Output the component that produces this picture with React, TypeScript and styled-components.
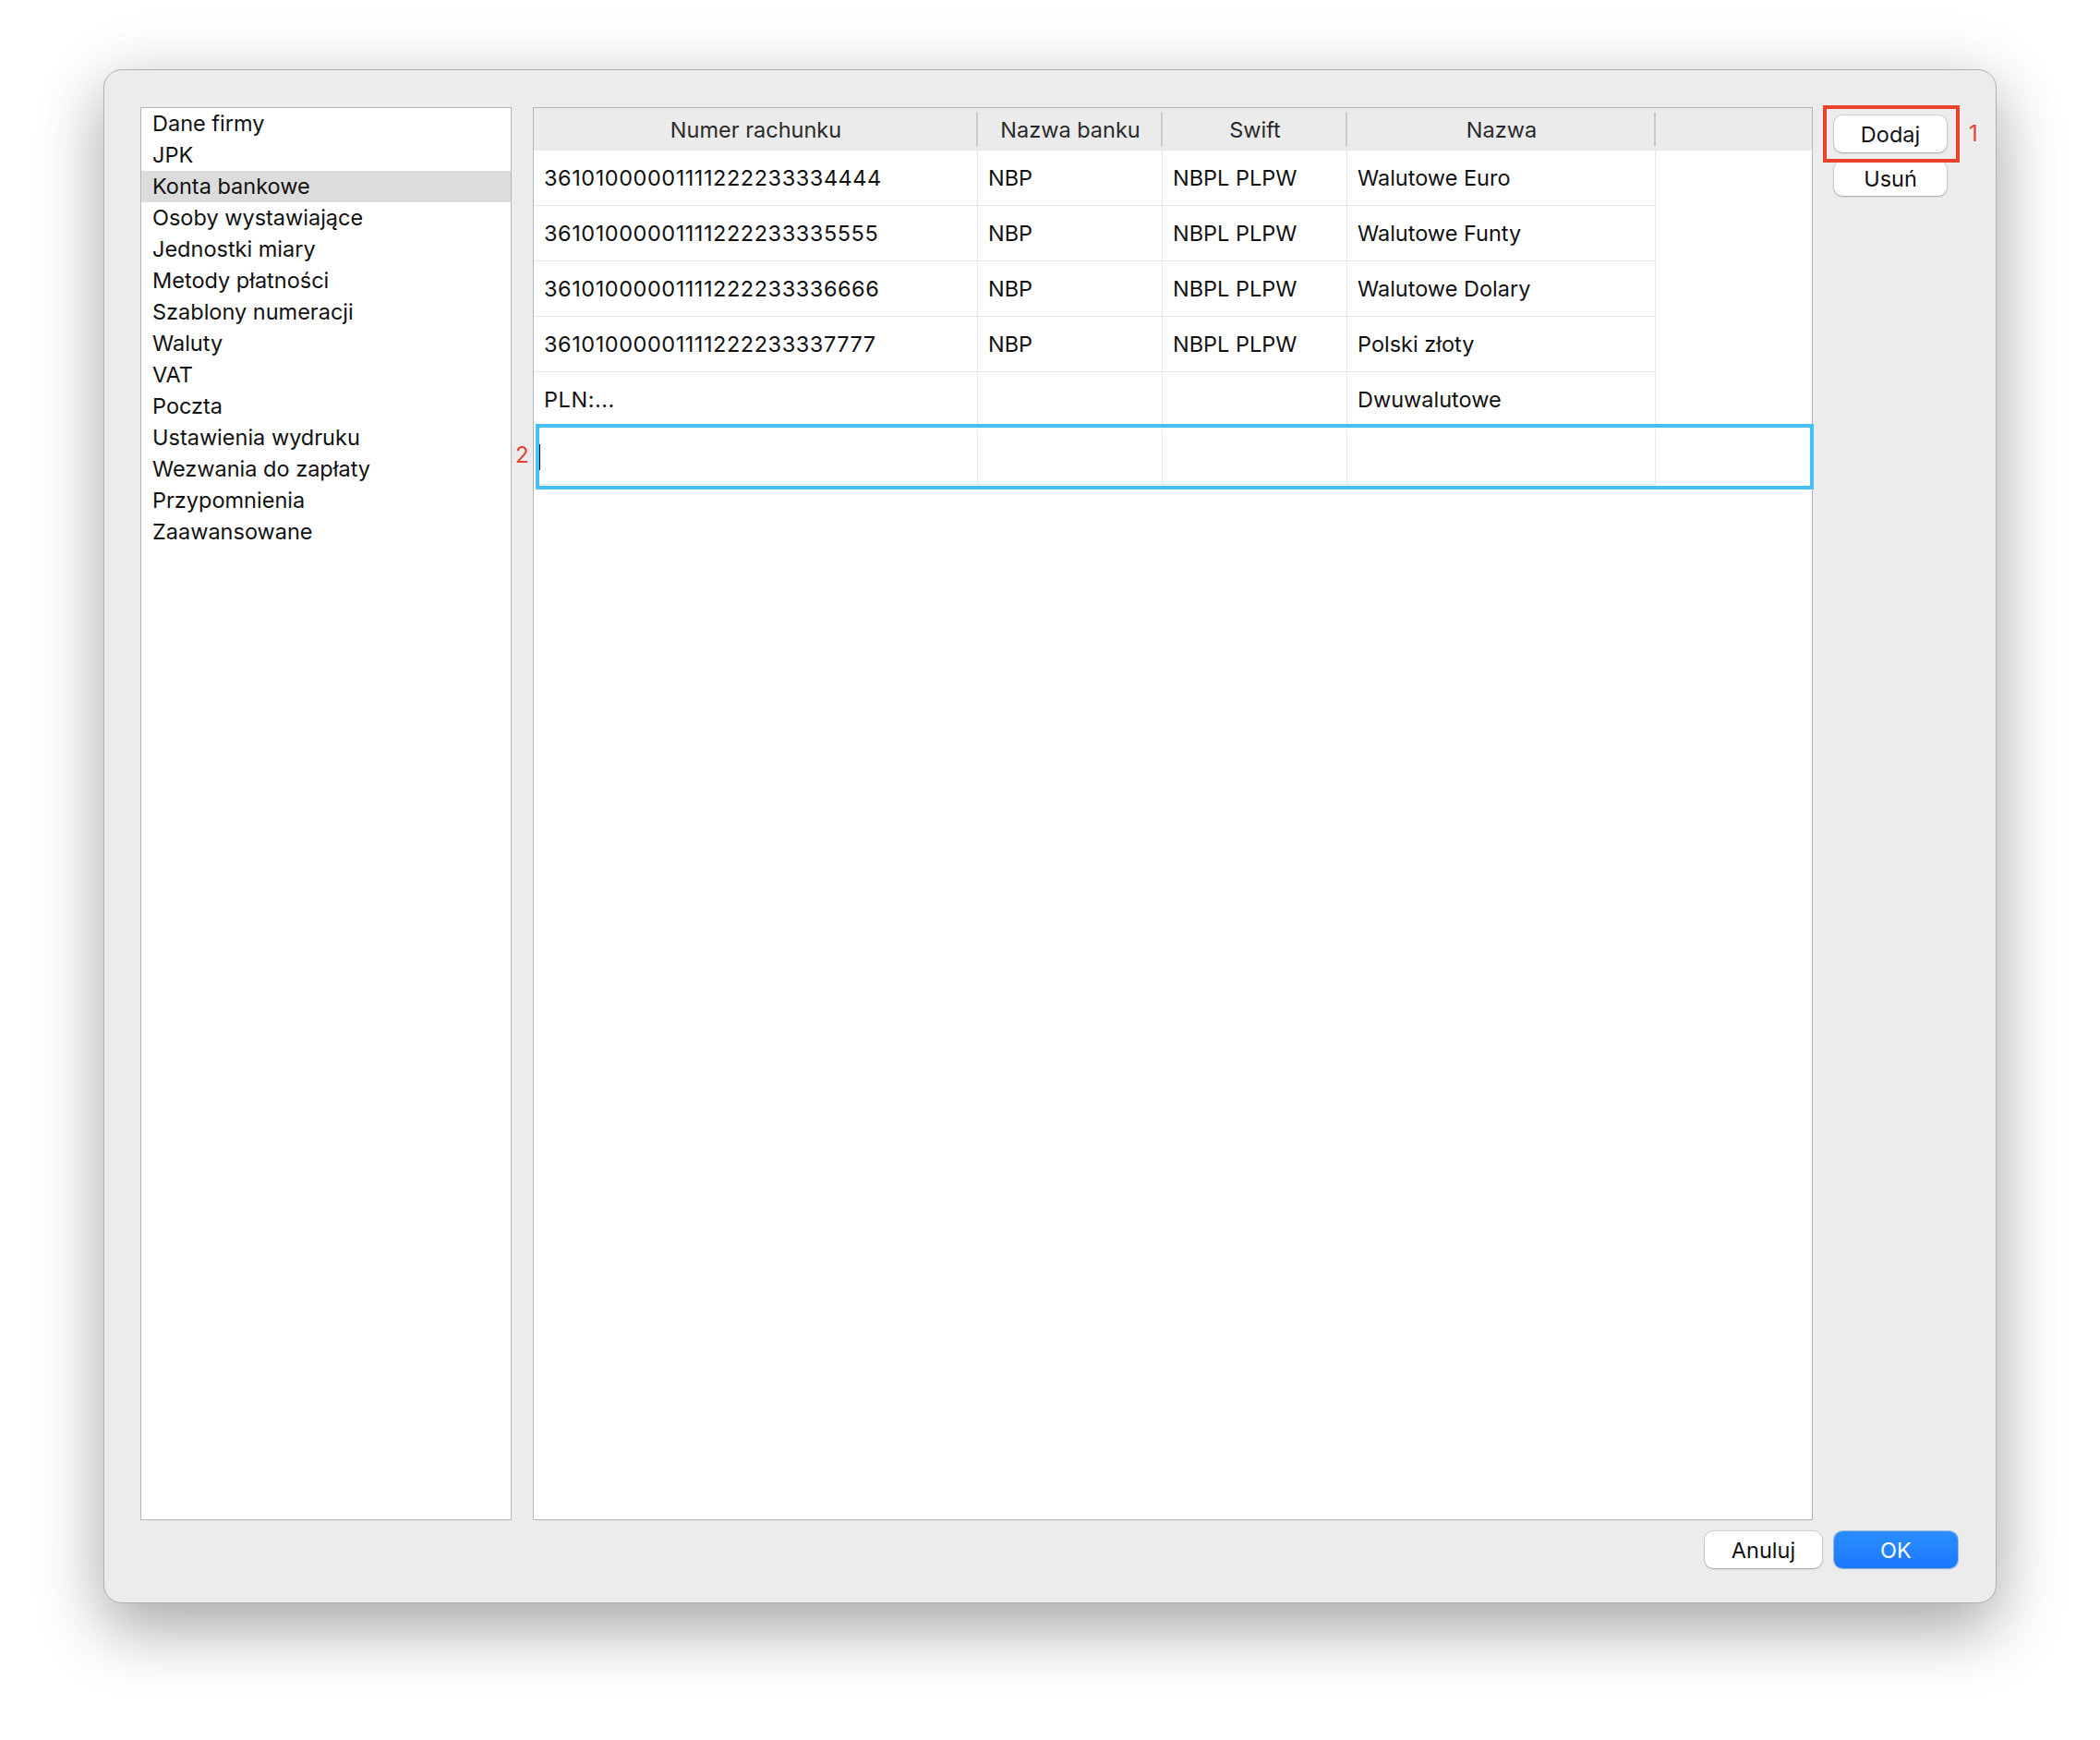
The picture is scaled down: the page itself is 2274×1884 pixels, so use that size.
import React from 'react';
import styled, { createGlobalStyle } from 'styled-components';

const sections = [
  'Dane firmy',
  'JPK',
  'Konta bankowe',
  'Osoby wystawiające',
  'Jednostki miary',
  'Metody płatności',
  'Szablony numeracji',
  'Waluty',
  'VAT',
  'Poczta',
  'Ustawienia wydruku',
  'Wezwania do zapłaty',
  'Przypomnienia',
  'Zaawansowane',
];

const columns = ['Numer rachunku', 'Nazwa banku', 'Swift', 'Nazwa'];

const accounts = [
  ['36101000001111222233334444', 'NBP', 'NBPL PLPW', 'Walutowe Euro'],
  ['36101000001111222233335555', 'NBP', 'NBPL PLPW', 'Walutowe Funty'],
  ['36101000001111222233336666', 'NBP', 'NBPL PLPW', 'Walutowe Dolary'],
  ['36101000001111222233337777', 'NBP', 'NBPL PLPW', 'Polski złoty'],
  ['PLN:...', '', '', 'Dwuwalutowe'],
];

const App = () => {
  const selected = 'Konta bankowe';

  return (
    <Page>
      <GlobalStyle />
      <Window>
        <Main>
          <Sidebar>
            {sections.map(name => (
              <SidebarItem key={name} $active={name === selected}>
                {name}
              </SidebarItem>
            ))}
          </Sidebar>

          <TablePanel>
            <Row>
              {columns.map(col => (
                <HeaderCell key={col}>{col}</HeaderCell>
              ))}
              <HeaderCell $last />
            </Row>
            {accounts.map(acc => (
              <Row key={acc[0] + acc[3]}>
                {acc.map((value, i) => (
                  <Cell key={i} $number={i === 0}>{value}</Cell>
                ))}
                <Cell $last />
              </Row>
            ))}
            <EditingRow>
              <Cell $editing>
                <Caret />
              </Cell>
              <Cell />
              <Cell />
              <Cell />
              <Cell $last />
            </EditingRow>
            <Marker $left={-20} $top={362}>2</Marker>
          </TablePanel>

          <ButtonColumn>
            <Highlight />
            <Marker $left={146} $top={15}>1</Marker>
            <MacButton $width={122}>Dodaj</MacButton>
            <MacButton $width={122} $height={38}>Usuń</MacButton>
          </ButtonColumn>
        </Main>

        <Footer>
          <MacButton $width={127}>Anuluj</MacButton>
          <MacButton $width={134} $primary>OK</MacButton>
        </Footer>
      </Window>
    </Page>
  );
};

const GlobalStyle = createGlobalStyle`
  body {
    margin: 0;
    background: #ffffff;
    font-family: Inter, "Noto Sans", "Liberation Sans", sans-serif;
    color: #1a1a1a;
  }
`;

const Page = styled.div`
  box-sizing: border-box;
  min-height: 1884px;
  padding: 75px 112px 0;
  background: #ffffff;
`;

const Window = styled.div`
  box-sizing: border-box;
  height: 1661px;
  display: flex;
  flex-direction: column;
  padding: 40px 41px 37px 39px;
  background: #ececec;
  border: 1px solid #b0b0b0;
  border-radius: 20px;
  box-shadow: 0 30px 70px rgba(0, 0, 0, 0.3), 0 0 80px rgba(0, 0, 0, 0.08);
`;

const Main = styled.div`
  flex: 1;
  min-height: 0;
  display: flex;
  gap: 23px;
`;

const Sidebar = styled.ul`
  box-sizing: border-box;
  width: 402px;
  margin: 0;
  padding: 0;
  list-style: none;
  background: #ffffff;
  border: 1px solid #b5b5b5;
`;

const SidebarItem = styled.li<{ $active?: boolean }>`
  height: 34px;
  line-height: 34px;
  padding-left: 12px;
  font-size: 23.5px;
  color: #111;
  background: ${p => (p.$active ? '#dcdcdc' : 'transparent')};
`;

const TablePanel = styled.div`
  position: relative;
  flex: 1;
  background: #ffffff;
  border: 1px solid #b5b5b5;
`;

const Row = styled.div`
  display: grid;
  grid-template-columns: 481px 200px 200px 334px 1fr;
`;

const EditingRow = styled(Row)`
  position: relative;
  margin-top: 2px;

  &::after {
    content: '';
    position: absolute;
    top: -6px;
    bottom: -5px;
    left: 2px;
    right: -2px;
    border: 4px solid #45bff5;
    pointer-events: none;
  }
`;

const HeaderCell = styled.div<{ $last?: boolean }>`
  position: relative;
  height: 46px;
  display: flex;
  align-items: center;
  justify-content: center;
  background: #ebebeb;
  font-size: 23.5px;
  color: #2a2a2a;

  &::after {
    content: '';
    display: ${p => (p.$last ? 'none' : 'block')};
    position: absolute;
    right: 0;
    top: 5px;
    bottom: 5px;
    width: 2px;
    background: #cacaca;
  }
`;

const Cell = styled.div<{ $last?: boolean; $editing?: boolean; $number?: boolean }>`
  box-sizing: border-box;
  height: 60px;
  display: flex;
  align-items: center;
  padding-left: ${p => (p.$editing ? '5px' : '11px')};
  font-size: 23.5px;
  letter-spacing: ${p => (p.$number ? '0.55px' : 'normal')};
  color: #111;
  border-right: ${p => (p.$last ? 'none' : '1px solid #e7e7e7')};
  border-bottom: ${p => (p.$last ? 'none' : '1px solid #e7e7e7')};
`;

const Caret = styled.span`
  display: inline-block;
  width: 2px;
  height: 28px;
  background: #111;
`;

const Marker = styled.span<{ $left: number; $top: number }>`
  position: absolute;
  left: ${p => p.$left}px;
  top: ${p => p.$top}px;
  font-size: 24px;
  line-height: 28px;
  color: #e8412c;
`;

const ButtonColumn = styled.div`
  position: relative;
  width: 134px;
  display: flex;
  flex-direction: column;
  align-items: flex-start;
  gap: 9px;
  padding-top: 9px;
`;

const Highlight = styled.div`
  position: absolute;
  left: -12px;
  top: -2px;
  width: 148px;
  height: 62px;
  box-sizing: border-box;
  border: 4px solid #e8432d;
  pointer-events: none;
`;

const MacButton = styled.button<{ $width: number; $height?: number; $primary?: boolean }>`
  width: ${p => p.$width}px;
  height: ${p => p.$height || 40}px;
  padding: 0;
  border: none;
  border-radius: 9px;
  font-family: inherit;
  font-size: 23.5px;
  color: ${p => (p.$primary ? '#ffffff' : '#111')};
  background: ${p => (p.$primary ? 'linear-gradient(#2b8eff, #1b78ff)' : '#ffffff')};
  box-shadow: ${p =>
    p.$primary
      ? '0 0 0 1px rgba(20, 110, 240, 0.35), 0 1px 2px rgba(0, 0, 0, 0.15)'
      : '0 0 0 1px rgba(0, 0, 0, 0.1), 0 1px 2px rgba(0, 0, 0, 0.22)'};
`;

const Footer = styled.div`
  display: flex;
  justify-content: flex-end;
  gap: 13px;
  margin-top: 12px;
`;

export default App;
